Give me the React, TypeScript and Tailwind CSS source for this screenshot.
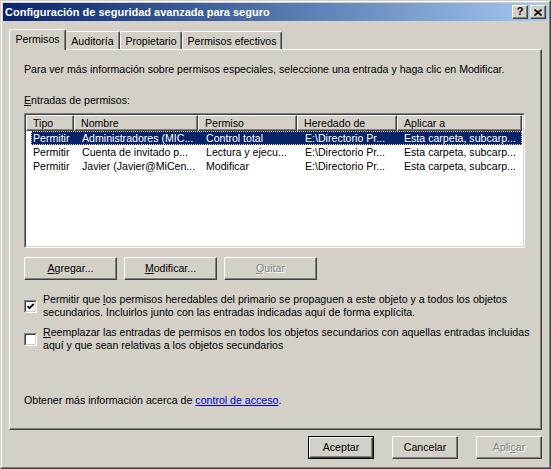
import React from 'react';

const raised =
  'border border-t-white border-l-white border-r-[#404040] border-b-[#404040] shadow-[inset_-1px_-1px_0_#808080]';

function CaptionButton({ children }: { children: React.ReactNode }) {
  return (
    <div className={`w-[16px] h-[14px] bg-[#d4d0c8] ${raised} flex items-center justify-center`}>
      {children}
    </div>
  );
}

function Button({
  children,
  className = '',
  disabled = false,
}: {
  children: React.ReactNode;
  className?: string;
  disabled?: boolean;
}) {
  return (
    <div
      className={`h-[23px] bg-[#d4d0c8] ${raised} flex items-center justify-center ${
        disabled ? 'text-[#808080] [text-shadow:1px_1px_0_#fff]' : ''
      } ${className}`}
    >
      {children}
    </div>
  );
}

function Checkbox({ checked }: { checked: boolean }) {
  return (
    <div className="w-[13px] h-[13px] shrink-0 border border-t-[#808080] border-l-[#808080] border-r-white border-b-white">
      <div className="w-full h-full bg-white border border-t-[#404040] border-l-[#404040] border-r-[#d4d0c8] border-b-[#d4d0c8] flex items-center justify-center">
        {checked && (
          <svg width="9" height="9" viewBox="0 0 9 9">
            <path d="M1.5 4 L3.5 6.2 L7.8 1.8" fill="none" stroke="#000" strokeWidth="1.8" />
          </svg>
        )}
      </div>
    </div>
  );
}

const columns = [
  { label: 'Tipo', w: 'w-[48px]' },
  { label: 'Nombre', w: 'w-[124px]' },
  { label: 'Permiso', w: 'w-[99px]' },
  { label: 'Heredado de', w: 'w-[100px]' },
  { label: 'Aplicar a', w: 'w-[125px]' },
];

const entradas = [
  ['Permitir', 'Administradores (MIC...', 'Control total', 'E:\\Directorio Pr...', 'Esta carpeta, subcarp...'],
  ['Permitir', 'Cuenta de invitado p...', 'Lectura y ejecu...', 'E:\\Directorio Pr...', 'Esta carpeta, subcarp...'],
  ['Permitir', 'Javier (Javier@MiCen...', 'Modificar', 'E:\\Directorio Pr...', 'Esta carpeta, subcarp...'],
];

const rowWidths = ['w-[43px] pl-[2px]', 'w-[124px] pl-[8px]', 'w-[99px] pl-[8px]', 'w-[100px] pl-[8px]', 'w-[125px] pl-[7px]'];

export default function App() {
  return (
    <div className="w-[551px] h-[469px] bg-[#d4d0c8] text-[10.6px] leading-[13px] text-black font-['Liberation_Sans',Arial,sans-serif] select-none">
      <div className="w-full h-full border border-t-[#d4d0c8] border-l-[#d4d0c8] border-r-[#404040] border-b-[#404040]">
        <div className="w-full h-full border border-t-white border-l-white border-r-[#808080] border-b-[#808080] p-px flex flex-col">
          {/* barra de título */}
          <div className="h-[18px] shrink-0 flex items-center gap-[2px] bg-linear-to-r from-[#0a246a] to-[#a6caf0] pl-[2px] pr-[2px]">
            <span className="flex-1 text-white font-bold text-[11px] whitespace-nowrap">
              Configuración de seguridad avanzada para seguro
            </span>
            <CaptionButton>
              <span className="font-bold text-[11px] leading-none -mt-px">?</span>
            </CaptionButton>
            <CaptionButton>
              <svg width="8" height="7" viewBox="0 0 8 7" className="-ml-px">
                <path d="M0.5 0.5 L7.5 6.5 M7.5 0.5 L0.5 6.5" stroke="#000" strokeWidth="1.6" />
              </svg>
            </CaptionButton>
          </div>

          <div className="flex flex-col pl-[6px] pt-[8px]">
            {/* pestañas */}
            <div className="h-[20px] flex items-start">
              <div className="relative z-10 h-[21px] w-[57px] bg-[#d4d0c8] border-t border-l border-r border-t-white border-l-white border-r-[#404040] rounded-t-[2px] shadow-[inset_-1px_0_0_#808080] flex justify-center pt-[3px]">
                Permisos
              </div>
              <div className="mt-[2px] h-[18px] w-[54px] border-t border-r border-t-white border-r-[#404040] shadow-[inset_-1px_0_0_#808080] rounded-tr-[2px] flex justify-center pt-[3px]">
                Auditoría
              </div>
              <div className="mt-[2px] h-[18px] w-[62px] border-t border-l border-r border-t-white border-l-white border-r-[#404040] shadow-[inset_-1px_0_0_#808080] rounded-t-[2px] flex justify-center pt-[3px]">
                Propietario
              </div>
              <div className="mt-[2px] h-[18px] w-[100px] border-t border-l border-r border-t-white border-l-white border-r-[#404040] shadow-[inset_-1px_0_0_#808080] rounded-t-[2px] flex justify-center pt-[3px]">
                Permisos efectivos
              </div>
            </div>

            {/* panel */}
            <div className="w-[533px] h-[381px] border border-t-white border-l-white border-r-[#404040] border-b-[#404040] shadow-[inset_-1px_-1px_0_#808080] pl-[14px] pt-[13px] flex flex-col">
              <p className="whitespace-nowrap">
                Para ver más información sobre permisos especiales, seleccione una entrada y haga clic en Modificar.
              </p>
              <p className="mt-[18px]">
                <span className="underline">E</span>ntradas de permisos:
              </p>

              {/* lista */}
              <div className="mt-[6px] w-[501px] h-[135px] border border-t-[#808080] border-l-[#808080] border-r-white border-b-white">
                <div className="w-full h-full bg-white border border-t-[#404040] border-l-[#404040] border-r-[#d4d0c8] border-b-[#d4d0c8] overflow-hidden">
                  <div className="flex h-[16px]">
                    {columns.map((c) => (
                      <div
                        key={c.label}
                        className={`${c.w} h-full bg-[#d4d0c8] ${raised} pl-[6px] flex items-center whitespace-nowrap`}
                      >
                        {c.label}
                      </div>
                    ))}
                  </div>
                  {entradas.map((row, i) => (
                    <div key={i} className="h-[14px] flex">
                      <div
                        className={`ml-[5px] flex h-full items-center ${
                          i === 0
                            ? 'bg-[#0a246a] text-white outline-1 outline-dotted outline-[#e8d890] -outline-offset-1'
                            : ''
                        }`}
                      >
                        {row.map((cell, j) => (
                          <div key={j} className={`${rowWidths[j]} shrink-0 whitespace-nowrap`}>
                            {cell}
                          </div>
                        ))}
                      </div>
                    </div>
                  ))}
                </div>
              </div>

              {/* botones de la lista */}
              <div className="mt-[9px] flex gap-[7px]">
                <Button className="w-[93px]">
                  <span>
                    <span className="underline">A</span>gregar...
                  </span>
                </Button>
                <Button className="w-[93px]">
                  <span>
                    <span className="underline">M</span>odificar...
                  </span>
                </Button>
                <Button className="w-[93px]" disabled>
                  <span>
                    <span className="underline">Q</span>uitar
                  </span>
                </Button>
              </div>

              {/* casillas */}
              <div className="mt-[13px] flex items-center gap-[6px]">
                <Checkbox checked />
                <p className="whitespace-nowrap">
                  Permitir que <span className="underline">l</span>os permisos heredables del primario se propaguen a este
                  objeto y a todos los objetos
                  <br />
                  secundarios. Incluirlos junto con las entradas indicadas aquí de forma explícita.
                </p>
              </div>
              <div className="mt-[7px] flex items-center gap-[6px]">
                <Checkbox checked={false} />
                <p className="whitespace-nowrap">
                  <span className="underline">R</span>eemplazar las entradas de permisos en todos los objetos secundarios
                  con aquellas entradas incluidas
                  <br />
                  aquí y que sean relativas a los objetos secundarios
                </p>
              </div>

              <p className="mt-[42px]">
                Obtener más información acerca de{' '}
                <span className="text-[#0000cc] underline">control de acceso</span>.
              </p>
            </div>

            {/* botones del cuadro */}
            <div className="mt-[6px] w-[533px] flex justify-end gap-[18px]">
              <div className="w-[66px] h-[23px] border border-black">
                <div className={`w-full h-full bg-[#d4d0c8] ${raised} flex items-center justify-center`}>
                  Aceptar
                </div>
              </div>
              <Button className="w-[66px]">Cancelar</Button>
              <Button className="w-[66px]" disabled>
                <span>
                  Apli<span className="underline">c</span>ar
                </span>
              </Button>
            </div>
          </div>
        </div>
      </div>
    </div>
  );
}
